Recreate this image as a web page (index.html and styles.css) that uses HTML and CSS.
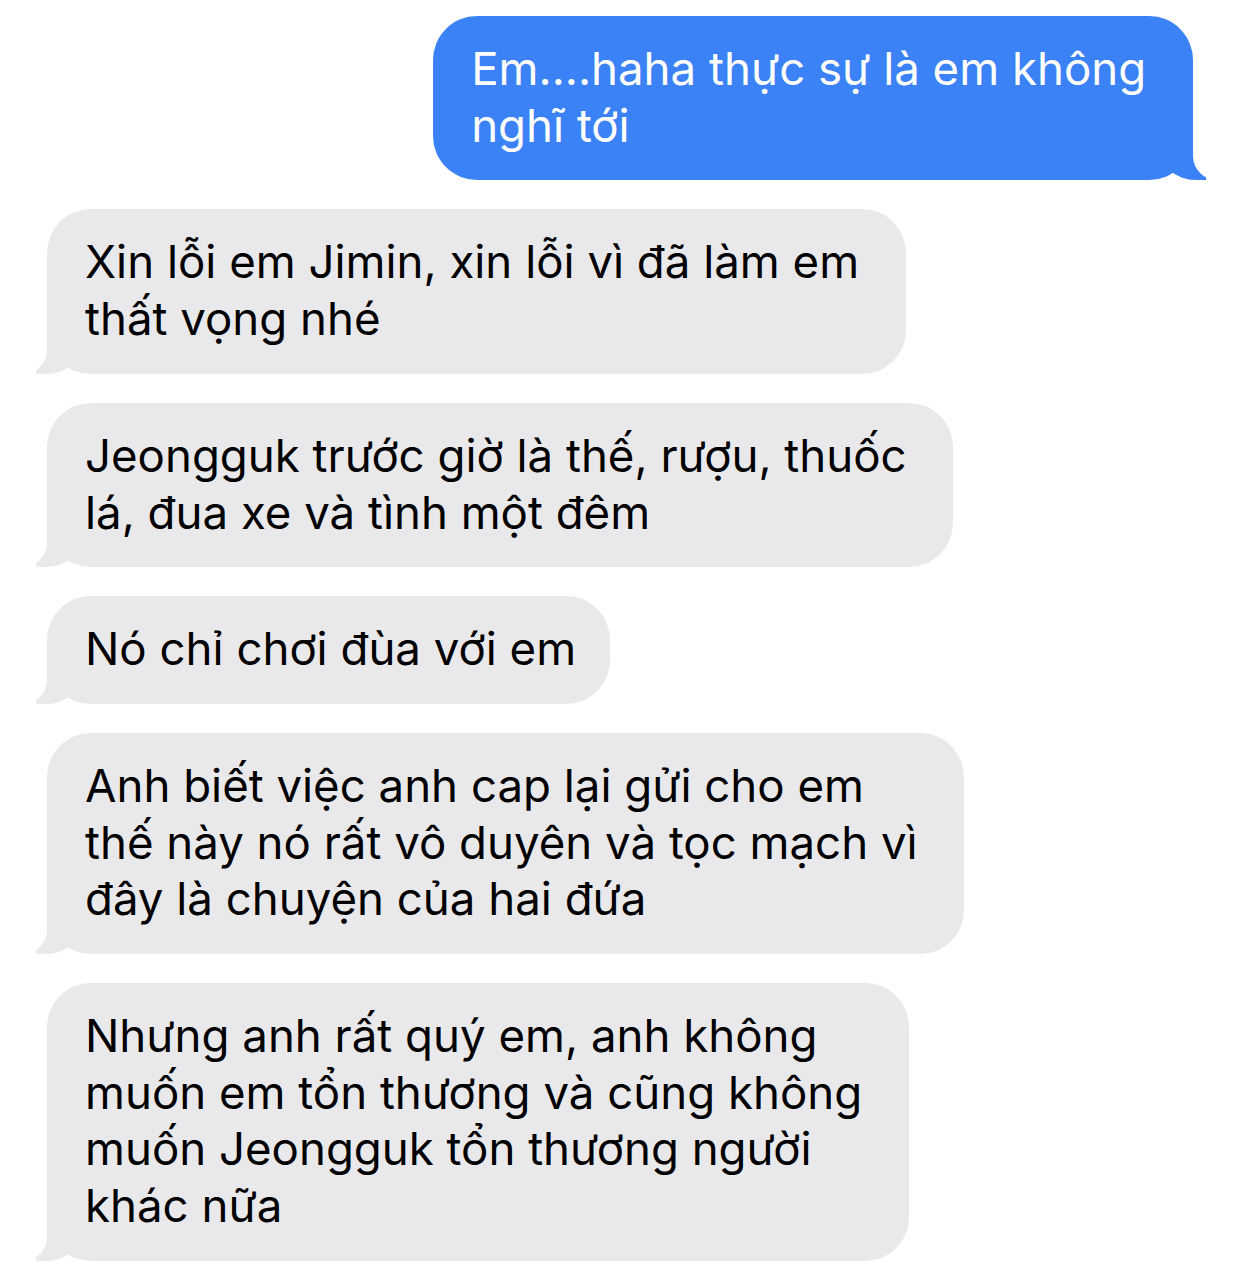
FILE: index.html
```html
<!DOCTYPE html>
<html lang="vi">
<head>
    <meta charset="UTF-8">
    <meta name="viewport" content="width=device-width, initial-scale=1.0">
    <title>Tin nhắn</title>
    <link rel="stylesheet" href="styles.css">
</head>
<body>
    <div class="chat">
        <div class="bubble sent">Em....haha thực sự là em không&nbsp;<br>nghĩ tới</div>

        <div class="bubble received">Xin lỗi em Jimin, xin lỗi vì đã làm em&nbsp;<br>thất vọng nhé</div>

        <div class="bubble received">Jeongguk trước giờ là thế, rượu, thuốc&nbsp;<br>lá, đua xe và tình một đêm</div>

        <div class="bubble received">Nó chỉ chơi đùa với em</div>

        <div class="bubble received">Anh biết việc anh cap lại gửi cho em&nbsp;<br>thế này nó rất vô duyên và tọc mạch vì&nbsp;<br>đây là chuyện của hai đứa</div>

        <div class="bubble received">Nhưng anh rất quý em, anh không&nbsp;<br>muốn em tổn thương và cũng không&nbsp;<br>muốn Jeongguk tổn thương người&nbsp;<br>khác nữa</div>
    </div>
</body>
</html>
```

FILE: styles.css
```css
body {
    margin: 0;
    padding: 0;
    background-color: #fff;
    font-family: Inter, "Noto Sans", sans-serif;
}

.chat {
    display: flex;
    flex-direction: column;
    gap: 29px;
    padding: 16px 43px 0 47px;
}

.bubble {
    position: relative;
    width: fit-content;
    white-space: nowrap;
    font-size: 45.6px;
    line-height: 56.7px;
    padding: 25px 34px 26px 38px;
    border-radius: 44px;
}

.sent {
    align-self: flex-end;
    background-color: #3b82f6;
    color: #fff;
}

.received {
    align-self: flex-start;
    background-color: #e9e9eb;
    color: #000;
}

/* bubble tails */
.bubble::before,
.bubble::after {
    content: "";
    position: absolute;
    bottom: 0;
    height: 46px;
}

.sent::before {
    right: -13px;
    width: 48px;
    background-color: #3b82f6;
    border-bottom-left-radius: 38px 34px;
}

.sent::after {
    right: -60px;
    width: 60px;
    background-color: #fff;
    border-bottom-left-radius: 24px;
}

.received::before {
    left: -11px;
    width: 48px;
    background-color: #e9e9eb;
    border-bottom-right-radius: 38px 34px;
}

.received::after {
    left: -60px;
    width: 60px;
    background-color: #fff;
    border-bottom-right-radius: 24px;
}
```
